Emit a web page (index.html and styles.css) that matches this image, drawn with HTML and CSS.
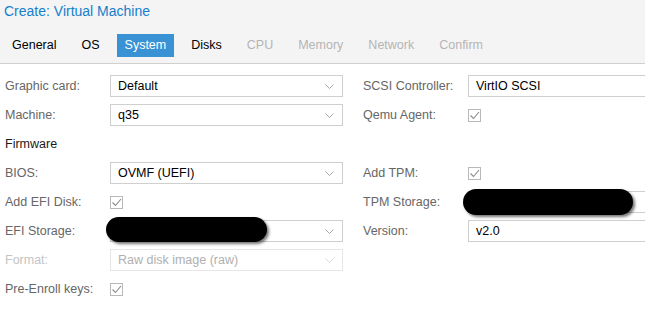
FILE: index.html
```html
<!DOCTYPE html>
<html lang="en">
<head>
    <meta charset="UTF-8">
    <meta name="viewport" content="width=device-width, initial-scale=1.0">
    <title>Create: Virtual Machine</title>

    <link rel="stylesheet" href="styles.css">
</head>

<body>
    <div class="window">
        <div class="header">
            <h1 class="title">Create: Virtual Machine</h1>
            <div class="tabs">
                <span class="tab">General</span>
                <span class="tab">OS</span>
                <span class="tab active">System</span>
                <span class="tab">Disks</span>
                <span class="tab disabled">CPU</span>
                <span class="tab disabled">Memory</span>
                <span class="tab disabled">Network</span>
                <span class="tab disabled">Confirm</span>
            </div>
        </div>

        <div class="form">
            <!-- left column -->
            <div class="column">
                <div class="row">
                    <label class="label">Graphic card:</label>
                    <div class="field combo">
                        <span class="value">Default</span>
                        <svg class="arrow" width="9" height="5" viewBox="0 0 9 5"><path d="M0.5 0.5 L4.5 4.5 L8.5 0.5" /></svg>
                    </div>
                </div>
                <div class="row">
                    <label class="label">Machine:</label>
                    <div class="field combo">
                        <span class="value">q35</span>
                        <svg class="arrow" width="9" height="5" viewBox="0 0 9 5"><path d="M0.5 0.5 L4.5 4.5 L8.5 0.5" /></svg>
                    </div>
                </div>
                <div class="row">
                    <span class="section">Firmware</span>
                </div>
                <div class="row">
                    <label class="label">BIOS:</label>
                    <div class="field combo">
                        <span class="value">OVMF (UEFI)</span>
                        <svg class="arrow" width="9" height="5" viewBox="0 0 9 5"><path d="M0.5 0.5 L4.5 4.5 L8.5 0.5" /></svg>
                    </div>
                </div>
                <div class="row">
                    <label class="label">Add EFI Disk:</label>
                    <svg class="check" width="13" height="13" viewBox="0 0 13 13"><rect x="0.5" y="0.5" width="12" height="12" /><path d="M2.5 6.5 L5.5 9.5 L11 3" /></svg>
                </div>
                <div class="row">
                    <label class="label">EFI Storage:</label>
                    <div class="field combo">
                        <span class="value"></span>
                        <span class="redact redact-efi"></span>
                        <svg class="arrow" width="9" height="5" viewBox="0 0 9 5"><path d="M0.5 0.5 L4.5 4.5 L8.5 0.5" /></svg>
                    </div>
                </div>
                <div class="row disabled-row">
                    <label class="label">Format:</label>
                    <div class="field combo">
                        <span class="value">Raw disk image (raw)</span>
                        <svg class="arrow" width="9" height="5" viewBox="0 0 9 5"><path d="M0.5 0.5 L4.5 4.5 L8.5 0.5" /></svg>
                    </div>
                </div>
                <div class="row">
                    <label class="label">Pre-Enroll keys:</label>
                    <svg class="check" width="13" height="13" viewBox="0 0 13 13"><rect x="0.5" y="0.5" width="12" height="12" /><path d="M2.5 6.5 L5.5 9.5 L11 3" /></svg>
                </div>
            </div>

            <!-- right column, its fields run on past the window edge -->
            <div class="column right">
                <div class="row">
                    <label class="label">SCSI Controller:</label>
                    <div class="field combo">
                        <span class="value">VirtIO SCSI</span>
                    </div>
                </div>
                <div class="row">
                    <label class="label">Qemu Agent:</label>
                    <svg class="check" width="13" height="13" viewBox="0 0 13 13"><rect x="0.5" y="0.5" width="12" height="12" /><path d="M2.5 6.5 L5.5 9.5 L11 3" /></svg>
                </div>
                <div class="row"></div>
                <div class="row">
                    <label class="label">Add TPM:</label>
                    <svg class="check" width="13" height="13" viewBox="0 0 13 13"><rect x="0.5" y="0.5" width="12" height="12" /><path d="M2.5 6.5 L5.5 9.5 L11 3" /></svg>
                </div>
                <div class="row">
                    <label class="label">TPM Storage:</label>
                    <div class="field combo">
                        <span class="value"></span>
                        <span class="redact redact-tpm"></span>
                    </div>
                </div>
                <div class="row">
                    <label class="label">Version:</label>
                    <div class="field combo">
                        <span class="value">v2.0</span>
                    </div>
                </div>
            </div>
        </div>
    </div>
</body>

</html>
```

FILE: styles.css
```css
* {
    padding: 0;
    margin: 0;
    box-sizing: border-box;
}

body {
    font-family: "Liberation Sans", Arial, sans-serif;
    background-color: #ffffff;
    overflow: hidden;
}

.window {
    width: 100%;
}

.header {
    background-color: #f4f4f4;
    border-bottom: 1px solid #d0d0d0;
    height: 64px;
}

.title {
    font-size: 14px;
    font-weight: normal;
    color: #157fcc;
    padding: 3px 0 0 4px;
    line-height: 17px;
    height: 34px;
}

.tabs {
    display: flex;
    padding-left: 4px;
}

.tab {
    font-size: 12.5px;
    color: #000000;
    height: 23px;
    line-height: 23px;
    padding: 0 8px;
    margin-right: 9px;
}

.tab.active {
    background-color: #3892d4;
    color: #ffffff;
}

.tab.disabled {
    color: #b4b4b4;
}

.form {
    display: grid;
    grid-template-columns: 338px 1fr;
    column-gap: 20px;
    padding: 11px 0 0 5px;
}

.column {
    display: flex;
    flex-direction: column;
    gap: 7px;
}

.row {
    display: flex;
    align-items: center;
    height: 22px;
}

.label {
    width: 105px;
    flex-shrink: 0;
    font-size: 12.5px;
    color: #666666;
}

.section {
    font-size: 12.5px;
    color: #1a1a1a;
}

.field {
    position: relative;
    width: 233px;
    flex-shrink: 0;
    height: 22px;
    border: 1px solid #cfcfcf;
    background-color: #ffffff;
    display: flex;
    align-items: center;
    justify-content: space-between;
    padding: 0 8px 0 7px;
}

.right .field {
    width: auto;
    flex: 1;
    border-right: none;
}

.value {
    font-size: 12.5px;
    color: #000000;
}

.arrow path {
    fill: none;
    stroke: #a8a8a8;
    stroke-width: 1;
}

.check rect {
    fill: #ffffff;
    stroke: #b8b8b8;
}

.check path {
    fill: none;
    stroke: #8c8c8c;
    stroke-width: 1.1;
}

.disabled-row .label {
    color: #c4c4c4;
}

.disabled-row .field {
    border-color: #e6e6e6;
}

.disabled-row .value {
    color: #b0b0b0;
}

.disabled-row .arrow path {
    stroke: #d8d8d8;
}

/* blacked-out values */
.redact {
    position: absolute;
    background-color: #000000;
    border-radius: 13px;
    box-shadow: 2px 2px 3px rgba(0, 0, 0, 0.55);
}

.redact-efi {
    left: -5px;
    top: -4px;
    width: 161px;
    height: 25px;
}

.redact-tpm {
    left: -6px;
    top: -3px;
    width: 170px;
    height: 26px;
}
```
